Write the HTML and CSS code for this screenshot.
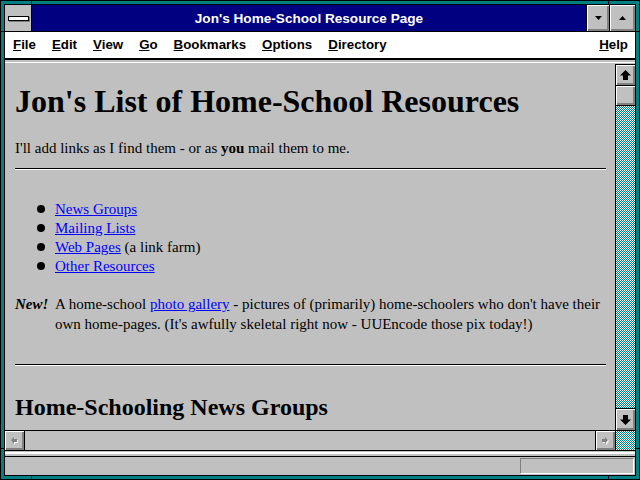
FILE: index.html
```html
<!DOCTYPE html>
<html>
<head>
<meta charset="utf-8">
<title>Jon's Home-School Resource Page</title>
<link rel="stylesheet" href="styles.css">
</head>
<body>
<div class="window">
  <span class="tick tick-tl-h"></span>
  <span class="tick tick-tr-h"></span>
  <span class="tick tick-bl-h"></span>
  <span class="tick tick-br-h"></span>
  <span class="tick tick-tl-v"></span>
  <span class="tick tick-tr-v"></span>
  <span class="tick tick-bl-v"></span>
  <span class="tick tick-br-v"></span>
  <div class="inner">
    <div class="titlebar">
      <div class="sysmenu"><span class="sysbar"></span></div>
      <div class="caption">Jon's Home-School Resource Page</div>
      <div class="tbtn tbtn-min"><svg width="7" height="4" viewBox="0 0 7 4"><polygon points="0,0 7,0 3.5,4" fill="#000"/></svg></div>
      <div class="tbtn tbtn-max"><svg width="7" height="4" viewBox="0 0 7 4"><polygon points="3.5,0 7,4 0,4" fill="#000"/></svg></div>
    </div>
    <div class="menubar">
      <span class="mi"><u>F</u>ile</span>
      <span class="mi"><u>E</u>dit</span>
      <span class="mi"><u>V</u>iew</span>
      <span class="mi"><u>G</u>o</span>
      <span class="mi"><u>B</u>ookmarks</span>
      <span class="mi"><u>O</u>ptions</span>
      <span class="mi"><u>D</u>irectory</span>
      <span class="mi mi-help"><u>H</u>elp</span>
    </div>
    <div class="sep"></div>
    <div class="viewport">
      <div class="page">
        <h1 class="title">Jon's List of Home-School Resources</h1>
        <p class="intro">I'll add links as I find them - or as <b>you</b> mail them to me.</p>
        <hr class="rule">
        <ul class="links">
          <li><a href="#news">News Groups</a></li>
          <li><a href="#mail">Mailing Lists</a></li>
          <li><a href="#web">Web Pages</a> (a link farm)</li>
          <li><a href="#other">Other Resources</a></li>
        </ul>
        <p class="note"><b class="new"><i>New!</i></b>A home-school <a href="#gallery">photo gallery</a> - pictures of (primarily) home-schoolers who don't have their<br>own home-pages. (It's awfully skeletal right now - UUEncode those pix today!)</p>
        <hr class="rule rule2">
        <h2 class="section">Home-Schooling News Groups</h2>
      </div>
      <div class="vscroll">
        <div class="sbtn sbtn-up"><svg width="11" height="10" viewBox="0 0 11 10"><polygon points="5.5,0 11,5.5 8,5.5 8,10 3,10 3,5.5 0,5.5" fill="#000"/></svg></div>
        <div class="thumb"></div>
        <div class="track"></div>
        <div class="sbtn sbtn-down"><svg width="11" height="10" viewBox="0 0 11 10"><polygon points="3,0 8,0 8,4.5 11,4.5 5.5,10 0,4.5 3,4.5" fill="#000"/></svg></div>
      </div>
    </div>
    <div class="hscroll">
      <div class="hbtn hbtn-left"><svg width="9" height="9" viewBox="0 0 9 9"><polygon points="1,4 4,1 4,3 7,3 7,6 4,6 4,8" fill="#fff" transform="translate(1,1)"/><polygon points="1,4 4,1 4,3 7,3 7,6 4,6 4,8" fill="#808080"/></svg></div>
      <div class="htrack"></div>
      <div class="hbtn hbtn-right"><svg width="9" height="9" viewBox="0 0 9 9"><polygon points="7,4 4,1 4,3 1,3 1,6 4,6 4,8" fill="#fff" transform="translate(1,1)"/><polygon points="7,4 4,1 4,3 1,3 1,6 4,6 4,8" fill="#808080"/></svg></div>
      <div class="corner"></div>
    </div>
    <div class="sep2"></div>
    <div class="status"><div class="field"></div></div>
  </div>
</div>
</body>
</html>
```
FILE: styles.css
```css
* { box-sizing: border-box; }
html, body { margin: 0; padding: 0; }
body { width: 640px; height: 480px; overflow: hidden; background: #008080; }

.window {
  position: relative;
  width: 640px;
  height: 480px;
  border: 1px solid #000;
  background: #008080;
  padding: 3px;
}
.tick { position: absolute; background: #000; }
.tick-tl-h, .tick-tr-h, .tick-bl-h, .tick-br-h { width: 1px; height: 4px; }
.tick-tl-v, .tick-tr-v, .tick-bl-v, .tick-br-v { width: 4px; height: 1px; }
.tick-tl-h { top: -1px; left: 30px; }
.tick-tr-h { top: -1px; left: 607px; }
.tick-bl-h { bottom: -1px; left: 30px; }
.tick-br-h { bottom: -1px; left: 607px; }
.tick-tl-v { left: -1px; top: 30px; }
.tick-tr-v { right: -1px; top: 30px; }
.tick-bl-v { left: -1px; bottom: 30px; }
.tick-br-v { right: -1px; bottom: 30px; }

.inner {
  height: 100%;
  border: 1px solid #000;
  background: #c0c0c0;
  display: flex;
  flex-direction: column;
  overflow: hidden;
}

/* title bar */
.titlebar {
  flex: none;
  display: flex;
  height: 27px;
  border-bottom: 1px solid #000;
}
.sysmenu {
  width: 27px;
  border-right: 1px solid #000;
  background: #c0c0c0;
  display: flex;
  align-items: center;
  justify-content: center;
}
.sysbar {
  width: 21px;
  height: 5px;
  border: 1px solid #000;
  background: #fff;
  box-shadow: 1px 1px 0 #808080;
}
.caption {
  flex: 1;
  background: #000080;
  color: #fff;
  font: bold 13.6px/27px "Liberation Sans", Arial, sans-serif;
  text-align: center;
  white-space: nowrap;
}
.tbtn {
  border-left: 1px solid #000;
  background: #c0c0c0;
  box-shadow: inset 1px 1px #fff, inset -1px -1px #808080, inset -2px -2px #808080;
  display: flex;
  align-items: center;
  justify-content: center;
}
.tbtn svg { display: block; }
.tbtn-min { width: 23px; }
.tbtn-max { width: 26px; }

/* menu bar */
.menubar {
  flex: none;
  height: 28px;
  background: #fff;
  border-bottom: 2px solid #000;
  display: flex;
  gap: 16px;
  padding: 0 7px 0 8px;
  font: bold 13.3px/26px "Liberation Sans", Arial, sans-serif;
  color: #000;
  white-space: nowrap;
}
.mi u { text-decoration-thickness: 1px; text-underline-offset: 1px; }
.mi-help { margin-left: auto; }

.sep {
  flex: none;
  height: 4px;
  background: linear-gradient(#c0c0c0 2px, #fff 2px, #fff 3px, #c0c0c0 3px);
}

/* viewport */
.viewport {
  flex: 1;
  min-height: 0;
  display: flex;
}
.page {
  flex: 1;
  overflow: hidden;
  padding: 0 9px 0 10px;
  font-family: "Liberation Serif", "Times New Roman", serif;
  font-size: 15px;
  line-height: 19px;
  color: #000;
}
.page a { color: #0000ff; text-decoration: underline; }
.title {
  margin: 19px 0 0;
  font: bold 32px/37px "Liberation Serif", "Times New Roman", serif;
  white-space: nowrap;
}
.intro { margin: 19px 0 0; }
.rule {
  margin: 10px 0 0;
  height: 0;
  border: 0;
  border-top: 1px solid #000;
  border-bottom: 1px solid #fff;
}
.links {
  margin: 30px 0 0;
  padding: 0 0 0 40px;
  list-style: none;
}
.links li::before {
  content: "";
  display: inline-block;
  width: 8px;
  height: 8px;
  border-radius: 50%;
  background: #000;
  margin-left: -18px;
  margin-right: 10px;
  vertical-align: 1px;
}
.note {
  margin: 18px 0 0;
  padding-left: 40px;
  text-indent: -40px;
  line-height: 20px;
  white-space: nowrap;
}
.new {
  display: inline-block;
  width: 40px;
  text-indent: 0;
}
.rule2 { margin-top: 30px; }
.section {
  margin: 27px 0 0;
  font: bold 24px/28px "Liberation Serif", "Times New Roman", serif;
  white-space: nowrap;
}

/* vertical scrollbar */
.vscroll {
  flex: none;
  width: 20px;
  border-left: 1px solid #000;
  display: flex;
  flex-direction: column;
}
.sbtn, .thumb, .hbtn {
  background: #c0c0c0;
  box-shadow: inset 1px 1px #fff, inset -1px -1px #808080, inset -2px -2px #808080;
  display: flex;
  align-items: center;
  justify-content: center;
}
.sbtn svg, .hbtn svg { display: block; }
.sbtn-up {
  flex: none;
  height: 22px;
  border-top: 1px solid #000;
  border-bottom: 1px solid #000;
}
.thumb {
  flex: none;
  height: 20px;
  border-bottom: 1px solid #000;
}
.track, .corner {
  background-color: #fff;
  background-image: conic-gradient(#008080 25%, #fff 0 50%, #008080 0 75%, #fff 0);
  background-size: 2px 2px;
}
.track { flex: 1; }
.sbtn-down {
  flex: none;
  height: 22px;
  border-top: 1px solid #000;
}

/* horizontal scrollbar */
.hscroll {
  flex: none;
  height: 21px;
  display: flex;
  border-top: 1px solid #000;
  border-bottom: 1px solid #000;
}
.hbtn-left { width: 20px; border-right: 1px solid #000; }
.htrack { flex: 1; background: #c0c0c0; }
.hbtn-right { width: 20px; border-left: 1px solid #000; }
.corner { width: 20px; border-left: 1px solid #000; }

.sep2 {
  flex: none;
  height: 6px;
  background: linear-gradient(#c0c0c0 1px, #fff 1px, #fff 3px, #c0c0c0 3px);
  border-bottom: 1px solid #000;
}

/* status bar */
.status {
  flex: none;
  height: 18px;
  display: flex;
  justify-content: flex-end;
  padding: 1px 1px 1px 0;
}
.field {
  width: 114px;
  border-top: 1px solid #808080;
  border-left: 1px solid #808080;
  border-bottom: 1px solid #fff;
  border-right: 1px solid #fff;
}
```
